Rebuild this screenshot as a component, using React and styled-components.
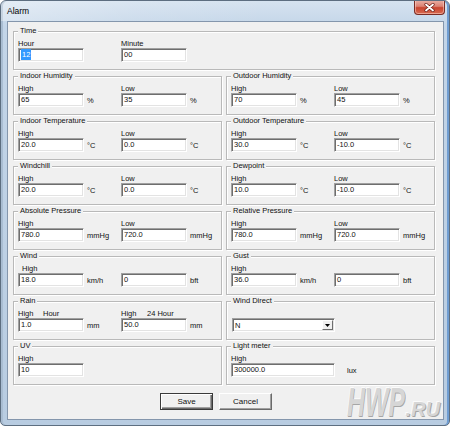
import React from 'react';
import styled, { createGlobalStyle } from 'styled-components';

const GlobalStyle = createGlobalStyle`
  html, body {
    margin: 0;
    padding: 0;
    background: #fff;
  }
  body {
    font-family: "Liberation Sans", Arial, sans-serif;
    font-size: 7.5px;
    color: #111;
  }
`;

// Aero style frame around the dialog
const Window = styled.div`
  position: relative;
  box-sizing: border-box;
  width: 450px;
  height: 426px;
  display: flex;
  flex-direction: column;
  border: 1px solid #5d6e80;
  border-radius: 6px 6px 5px 5px;
  overflow: hidden;
  background: linear-gradient(180deg, #d6e3f0 0%, #c3d5e8 6%, #bdd0e4 60%, #b8cce1 100%);
  box-shadow: inset -2px 0 0 #6f9dd2, inset 2px 0 0 #a9bdd2;
`;

const TitleBar = styled.div`
  height: 20px;
  display: flex;
  justify-content: space-between;
  align-items: flex-start;
  padding-left: 6px;
  background: linear-gradient(100deg, rgba(255,255,255,0.35) 0%, rgba(255,255,255,0.1) 30%, rgba(255,255,255,0) 60%);
`;

const Title = styled.span`
  font-size: 8.5px;
  line-height: 20px;
  color: #000;
`;

const CloseButton = styled.div`
  box-sizing: border-box;
  width: 31px;
  height: 15px;
  margin: -1px 4px 0 0;
  border: 1px solid #7a2c24;
  border-top: none;
  border-radius: 0 0 4px 4px;
  background: linear-gradient(180deg, #eab2a8 0%, #dc8273 45%, #c8442f 55%, #d86b52 100%);
  box-shadow: inset 0 0 0 1px rgba(255, 220, 210, 0.5);
  display: flex;
  align-items: center;
  justify-content: center;
`;

const Client = styled.div`
  position: relative;
  flex: 1;
  display: flex;
  flex-direction: column;
  margin: 0 5px 5px 6px;
  padding: 9px 8px 0 5px;
  border: 1px solid #8496ac;
  background: #f0f0f0;
`;

const Form = styled.div`
  display: grid;
  grid-template-columns: 1fr 1fr;
  column-gap: 4px;
  row-gap: 6px;
`;

const Group = styled.div`
  position: relative;
  padding: 7px 4px 7px 4px;
  border: 1px solid #b9b9b9;
  box-shadow: 1px 1px 0 #fff, inset 1px 1px 0 #fff;
  grid-column: ${p => (p.$wide ? '1 / -1' : 'auto')};
`;

const Legend = styled.span`
  position: absolute;
  top: -6px;
  left: 4px;
  padding: 0 2px;
  line-height: 10px;
  background: #f0f0f0;
`;

const Pair = styled.div`
  display: grid;
  grid-template-columns: 103px 1fr;
`;

const Field = styled.div`
  display: flex;
  flex-direction: column;
`;

const Label = styled.div`
  height: 9px;
  line-height: 9px;
  padding-left: ${p => p.$indent || 0}px;
  white-space: nowrap;
`;

const LabelPart = styled.span`
  display: inline-block;
  width: ${p => p.$w}px;
`;

const InputRow = styled.div`
  display: flex;
  align-items: center;
`;

const TextBox = styled.div`
  box-sizing: border-box;
  width: ${p => p.$w || 66}px;
  height: 14px;
  padding-left: 2px;
  line-height: 12px;
  background: #fff;
  border: 1px solid;
  border-color: #a0a0a0 #fff #fff #a0a0a0;
  box-shadow: inset 1px 1px 0 #6e6e6e, inset -1px -1px 0 #e3e3e3;
  white-space: nowrap;
  overflow: hidden;
`;

const Selected = styled.span`
  display: inline-block;
  padding: 0 1px;
  line-height: 11px;
  background: #3399ff;
  color: #fff;
`;

const Unit = styled.span`
  margin-left: ${p => (p.$gap != null ? p.$gap : 3)}px;
  padding-top: 1px;
`;

const Select = styled.div`
  box-sizing: border-box;
  width: 103px;
  height: 14px;
  margin: 0 0 0 1px;
  display: flex;
  align-items: center;
  justify-content: space-between;
  padding-left: 2px;
  background: #fff;
  border: 1px solid;
  border-color: #a0a0a0 #fff #fff #a0a0a0;
  box-shadow: inset 1px 1px 0 #6e6e6e, inset -1px -1px 0 #e3e3e3;
`;

const DropButton = styled.div`
  box-sizing: border-box;
  width: 11px;
  height: 10px;
  margin-right: 1px;
  display: flex;
  align-items: center;
  justify-content: center;
  background: #f0f0f0;
  border: 1px solid;
  border-color: #fff #6e6e6e #6e6e6e #fff;
`;

const ButtonRow = styled.div`
  display: flex;
  gap: 6px;
  margin-top: 8px;
  padding-left: 147px;
`;

const Button = styled.div`
  box-sizing: border-box;
  width: 53px;
  height: 17px;
  display: flex;
  align-items: center;
  justify-content: center;
  font-size: 8px;
  background: #f0f0f0;
  border: 1px solid;
  border-color: ${p => (p.$default ? '#3a3a3a' : '#fff #6a6a6a #6a6a6a #fff')};
  box-shadow: ${p =>
    p.$default
      ? 'inset 1px 1px 0 #fff, inset -1px -1px 0 #6a6a6a, inset -2px -2px 0 #a0a0a0'
      : 'inset -1px -1px 0 #a0a0a0'};
`;

const Watermark = styled.div`
  position: absolute;
  right: 3px;
  bottom: 1px;
  display: flex;
  align-items: flex-end;
  font-weight: bold;
  font-style: italic;
  color: #d6d6d6;
  text-shadow: 1px 1px 0 #a6a6a6, -1px -1px 0 #fbfbfb;
  pointer-events: none;
`;

const MarkBig = styled.span`
  display: inline-block;
  font-size: 40px;
  line-height: 32px;
  transform: scaleX(0.62);
  transform-origin: left bottom;
  margin-right: -35px;
`;

const MarkSmall = styled.span`
  font-size: 20px;
  line-height: 17px;
`;

const Entry = ({ label, indent, value, unit, gap, w }) => (
  <Field>
    <Label $indent={indent}>{label}</Label>
    <InputRow>
      <TextBox $w={w}>{value}</TextBox>
      {unit && <Unit $gap={gap}>{unit}</Unit>}
    </InputRow>
  </Field>
);

const HighLow = ({ title, high, low, unit }) => (
  <Group>
    <Legend>{title}</Legend>
    <Pair>
      <Entry label="High" value={high} unit={unit} />
      <Entry label="Low" value={low} unit={unit} />
    </Pair>
  </Group>
);

const CloseIcon = () => (
  <svg width="11" height="9" viewBox="0 0 11 9">
    <path d="M2 1.5 L9 7.5 M9 1.5 L2 7.5" stroke="#6b1c14" strokeWidth="3.2" strokeLinecap="round" />
    <path d="M2 1.5 L9 7.5 M9 1.5 L2 7.5" stroke="#fff" strokeWidth="1.8" strokeLinecap="round" />
  </svg>
);

const ArrowDown = () => (
  <svg width="5" height="3" viewBox="0 0 5 3">
    <path d="M0 0 H5 L2.5 3 Z" fill="#000" />
  </svg>
);

export default function App() {
  return (
    <>
      <GlobalStyle />
      <Window>
        <TitleBar>
          <Title>Alarm</Title>
          <CloseButton>
            <CloseIcon />
          </CloseButton>
        </TitleBar>
        <Client>
          <Form>
            <Group $wide>
              <Legend>Time</Legend>
              <Pair>
                <Field>
                  <Label>Hour</Label>
                  <InputRow>
                    <TextBox>
                      <Selected>12</Selected>
                    </TextBox>
                  </InputRow>
                </Field>
                <Entry label="Minute" value="00" />
              </Pair>
            </Group>

            <HighLow title="Indoor Humidity" high="65" low="35" unit="%" />
            <HighLow title="Outdoor Humidity" high="70" low="45" unit="%" />
            <HighLow title="Indoor Temperature" high="20.0" low="0.0" unit="°C" />
            <HighLow title="Outdoor Temperature" high="30.0" low="-10.0" unit="°C" />
            <HighLow title="Windchill" high="20.0" low="0.0" unit="°C" />
            <HighLow title="Dewpoint" high="10.0" low="-10.0" unit="°C" />
            <HighLow title="Absolute Pressure" high="780.0" low="720.0" unit="mmHg" />
            <HighLow title="Relative Pressure" high="780.0" low="720.0" unit="mmHg" />

            <Group>
              <Legend>Wind</Legend>
              <Pair>
                <Entry label="High" indent={4} value="18.0" unit="km/h" />
                <Entry label="" value="0" unit="bft" />
              </Pair>
            </Group>
            <Group>
              <Legend>Gust</Legend>
              <Pair>
                <Entry label="High" value="36.0" unit="km/h" />
                <Entry label="" value="0" unit="bft" />
              </Pair>
            </Group>

            <Group>
              <Legend>Rain</Legend>
              <Pair>
                <Field>
                  <Label>
                    <LabelPart $w={25}>High</LabelPart>Hour
                  </Label>
                  <InputRow>
                    <TextBox>1.0</TextBox>
                    <Unit>mm</Unit>
                  </InputRow>
                </Field>
                <Field>
                  <Label>
                    <LabelPart $w={26}>High</LabelPart>24 Hour
                  </Label>
                  <InputRow>
                    <TextBox>50.0</TextBox>
                    <Unit>mm</Unit>
                  </InputRow>
                </Field>
              </Pair>
            </Group>
            <Group>
              <Legend>Wind Direct</Legend>
              <Field>
                <Label />
                <Select>
                  N
                  <DropButton>
                    <ArrowDown />
                  </DropButton>
                </Select>
              </Field>
            </Group>

            <Group>
              <Legend>UV</Legend>
              <Entry label="High" value="10" />
            </Group>
            <Group>
              <Legend>Light meter</Legend>
              <Entry label="High" value="300000.0" unit="lux" gap={12} w={104} />
            </Group>
          </Form>

          <ButtonRow>
            <Button $default>Save</Button>
            <Button>Cancel</Button>
          </ButtonRow>

          <Watermark>
            <MarkBig>HWP</MarkBig>
            <MarkSmall>.RU</MarkSmall>
          </Watermark>
        </Client>
      </Window>
    </>
  );
}
